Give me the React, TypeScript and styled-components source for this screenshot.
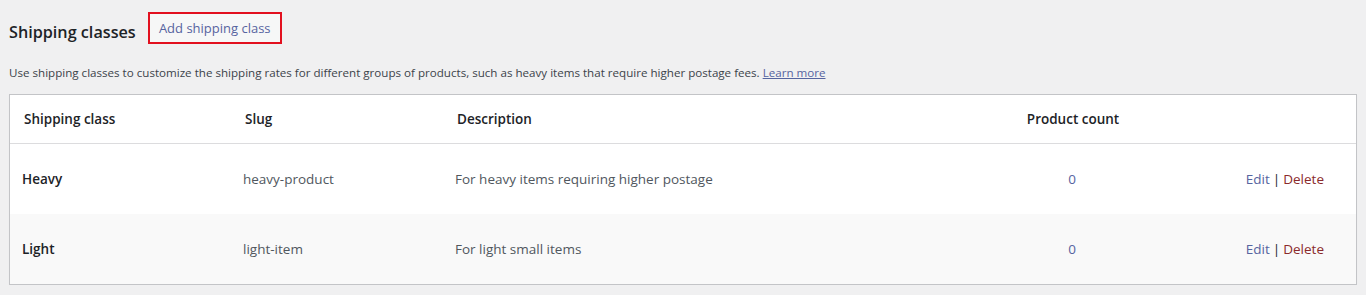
import React from 'react';
import styled, { createGlobalStyle } from 'styled-components';

const GlobalStyle = createGlobalStyle`
  body {
    margin: 0;
    background: #f0f0f1;
    font-family: "Open Sans", "Noto Sans", sans-serif;
    color: #3c434a;
  }
`;

const Page = styled.div`
  padding: 12px 9px 0 9px;
`;

const TitleRow = styled.div`
  display: flex;
  align-items: center;
  height: 32px;
`;

const Title = styled.h1`
  margin: 0 12px 0 0;
  padding-top: 7px;
  font-size: 16.2px;
  font-weight: 600;
  color: #1d2327;
`;

const AddButton = styled.a`
  box-sizing: border-box;
  height: 32px;
  width: 134px;
  display: flex;
  align-items: center;
  justify-content: center;
  border: 2px solid #e2101f;
  background: #f6f7f7;
  color: #5664a0;
  font-size: 13px;
  text-decoration: none;
`;

const Intro = styled.p`
  margin: 21px 0 13px;
  font-size: 11.6px;
  line-height: 16px;
  color: #3c434a;
`;

const LearnMore = styled.a`
  color: #5664a0;
  text-decoration: underline;
`;

const Table = styled.div`
  background: #fff;
  border: 1px solid #c3c4c7;
  box-shadow: 0 1px 1px rgba(0, 0, 0, 0.04);
`;

const Row = styled.div<{ $head?: boolean; $alt?: boolean }>`
  display: grid;
  grid-template-columns: 221px 212px 541px 152px 1fr;
  align-items: center;
  padding: 0 32px 0 12px;
  height: ${(p) => (p.$head ? '48px' : '70px')};
  background: ${(p) => (p.$alt ? '#f9f9f9' : '#fff')};
  border-bottom: ${(p) => (p.$head ? '1px solid #dcdcde' : 'none')};
  font-size: 13.5px;
`;

const HeadCell = styled.div<{ $center?: boolean }>`
  padding-left: 2px;
  font-weight: 600;
  color: #1d2327;
  text-align: ${(p) => (p.$center ? 'center' : 'left')};
`;

const Cell = styled.div<{ $strong?: boolean; $center?: boolean; $right?: boolean }>`
  font-weight: ${(p) => (p.$strong ? 600 : 400)};
  color: ${(p) => (p.$strong ? '#1d2327' : '#50575e')};
  text-align: ${(p) => (p.$center ? 'center' : p.$right ? 'right' : 'left')};
`;

const Count = styled.span`
  color: #5664a0;
`;

const EditLink = styled.a`
  color: #5664a0;
  text-decoration: none;
`;

const DeleteLink = styled.a`
  color: #8a2a2b;
  text-decoration: none;
`;

const Sep = styled.span`
  color: #1d2327;
  margin: 0 3px;
`;

const classes = [
  { name: 'Heavy', slug: 'heavy-product', description: 'For heavy items requiring higher postage', count: 0 },
  { name: 'Light', slug: 'light-item', description: 'For light small items', count: 0 },
];

export default function App() {
  return (
    <>
      <GlobalStyle />
      <Page>
        <TitleRow>
          <Title>Shipping classes</Title>
          <AddButton href="#">Add shipping class</AddButton>
        </TitleRow>
        <Intro>
          Use shipping classes to customize the shipping rates for different groups of products, such as heavy
          items that require higher postage fees. <LearnMore href="#">Learn more</LearnMore>
        </Intro>
        <Table>
          <Row $head>
            <HeadCell>Shipping class</HeadCell>
            <HeadCell>Slug</HeadCell>
            <HeadCell>Description</HeadCell>
            <HeadCell $center>Product count</HeadCell>
            <HeadCell />
          </Row>
          {classes.map((c, i) => (
            <Row key={c.slug} $alt={i % 2 === 1}>
              <Cell $strong>{c.name}</Cell>
              <Cell>{c.slug}</Cell>
              <Cell>{c.description}</Cell>
              <Cell $center>
                <Count>{c.count}</Count>
              </Cell>
              <Cell $right>
                <EditLink href="#">Edit</EditLink>
                <Sep>|</Sep>
                <DeleteLink href="#">Delete</DeleteLink>
              </Cell>
            </Row>
          ))}
        </Table>
      </Page>
    </>
  );
}
